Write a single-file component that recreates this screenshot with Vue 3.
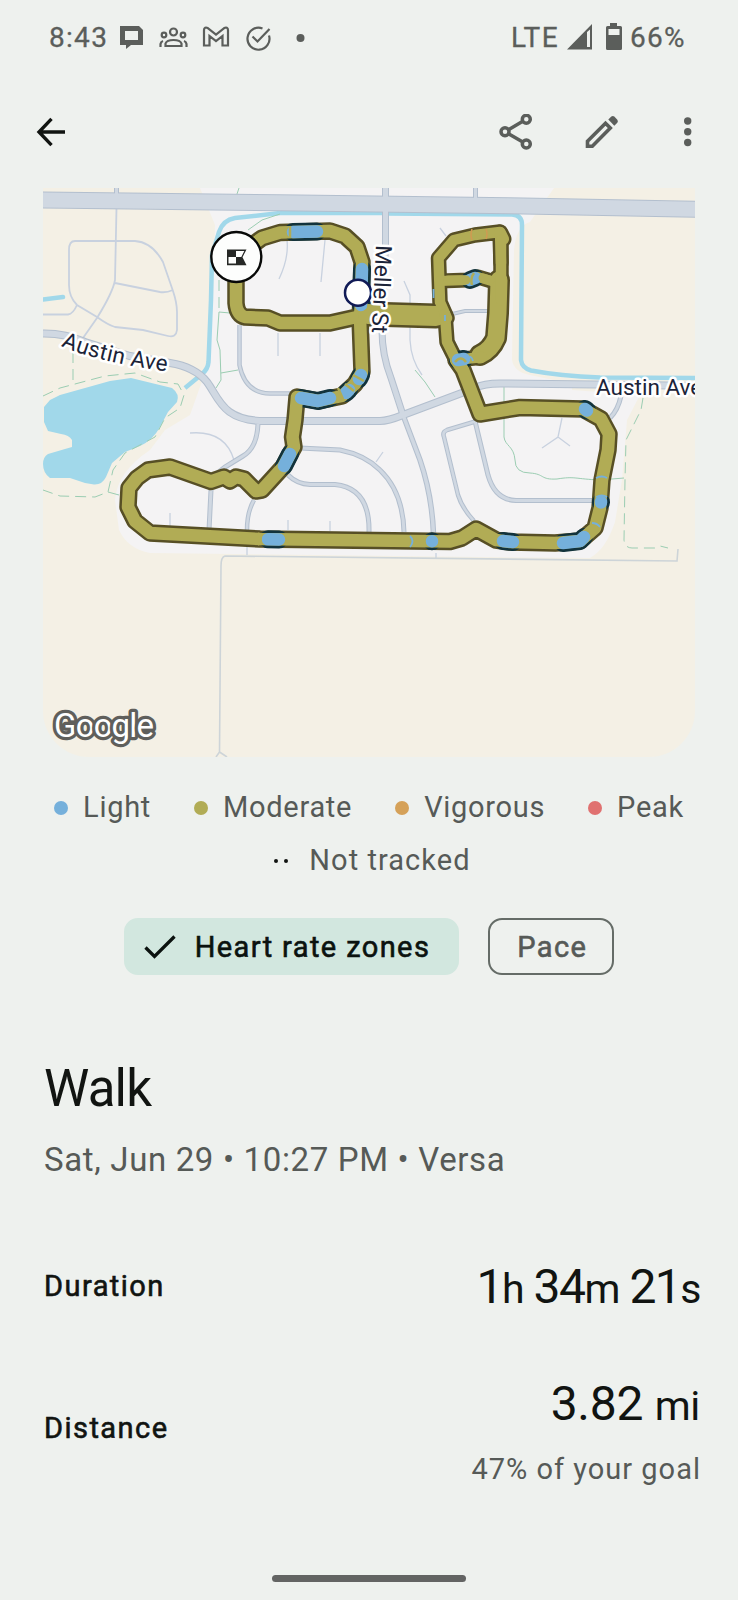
<template>
  <div class="screen">
    <header class="status-bar">
      <span class="time">8:43</span>
      <svg class="st-icons" width="190" height="40" viewBox="115 18 190 40">
        <path class="fill" fill-rule="evenodd" d="M120 26h19l4 4v15h-12l-5 4v-4h-6zM125 31v9h13v-9z" />
        <g class="line" stroke-width="2.2">
          <circle cx="173.500" cy="32" r="3.500" />
          <circle cx="164" cy="35" r="2.300" />
          <circle cx="183" cy="35" r="2.300" />
          <path d="M165.500 46v-2.500c1-3 5-3.500 8-3.500s7 .5 8 3.500V46z" />
          <path d="M160.500 47v-3c.2-1.500 1-2.500 2.500-3M186.500 47v-3c-.2-1.500-1-2.500-2.500-3" />
          <path d="M204 45.500V30c0-2.500 2-3 3.500-2l8.500 6.500 8.500-6.500c1.500-1 3.500-.5 3.500 2v15.500h-5.500v-9.500l-6.500 5-6.500-5v9.500z" />
          <path d="M262.500 28.500a11 11 0 1 0 6.500 7" />
          <path d="M252.500 36.500l5 5 12-12.500" />
        </g>
        <circle class="fill" cx="300.500" cy="38" r="4" />
      </svg>
      <span class="network">LTE</span>
      <svg class="signal" width="60" height="40" viewBox="565 18 60 40">
        <path class="fill" fill-rule="evenodd" d="M567 49.500L592 24v25.500zM587 32v15h3V29.500z" />
        <path class="fill" fill-rule="evenodd" d="M610 23h7v3h3.500q1.500 0 1.500 1.500v21q0 1.500-1.500 1.500h-13q-1.500 0-1.500-1.500v-21q0-1.500 1.500-1.500h2.500zM608.500 29v6h11v-6z" />
      </svg>
      <span class="percent">66%</span>
    </header>

    <nav class="app-bar">
      <button class="icon-btn" aria-label="Back">
        <svg width="30" height="30" viewBox="0 0 30 30">
          <path d="M29 15H4M15.500 1.800L3 15l12.500 13.200" fill="none" stroke="#111411" stroke-width="3.400" />
        </svg>
      </button>
      <div class="actions">
        <button class="icon-btn" aria-label="Share">
          <svg width="34" height="36" viewBox="499 114 34 36">
            <g class="line" stroke-width="3.500">
              <circle cx="505" cy="131.700" r="4" />
              <circle cx="526.300" cy="119.300" r="4" />
              <circle cx="526.300" cy="144" r="4" />
              <path d="M508.500 129.700l14.300-8.400M508.500 133.700l14.300 8.300" />
            </g>
          </svg>
        </button>
        <button class="icon-btn" aria-label="Edit">
          <svg width="34" height="36" viewBox="585 114 34 36">
            <path class="line" stroke-width="3.600" d="M587.500 146.200v-5l18-18 4.800 4.800-18 18.200z" />
            <path class="fill" d="M608.300 119.500l3-3q1.500-1.200 3 0l3 3.200q1.200 1.500 0 3l-3 3z" />
          </svg>
        </button>
        <button class="icon-btn" aria-label="More">
          <svg width="10" height="36" viewBox="683 114 10 36">
            <circle class="fill" cx="687.700" cy="121" r="3.700" />
            <circle class="fill" cx="687.700" cy="131.700" r="3.700" />
            <circle class="fill" cx="687.700" cy="142.500" r="3.700" />
          </svg>
        </button>
      </div>
    </nav>

    <svg class="map" viewBox="43 188 652 569">
      <defs>
        <path id="austin-west" d="M61 346Q100 363 172 372" />
        <path id="meller" d="M376 245L371.500 340" />
      </defs>
      <rect x="43" y="188" width="652" height="569" fill="#f4f0e5" />
      <path fill="#f4f3f4" d="M200 188H554L530 222Q516 226 514 250L512 360Q514 372 530 375L572 384V390L640 395L627 420L622 480L615 522Q606 549 590 558L480 557L150 553Q128 549 119 530L115 500Q117 472 150 450L165 430L190 415L206 370L213 300L215 225Z" />
      <!-- lake and canals -->
      <path fill="#a1d8ea" d="M44 407L50 400L60 395L110 381L131 378L172 388Q180 394 177 402L168 412L160 427Q153 440 140 446L125 452L112 463L106 477Q102 485 94 484.500L85 483L70 478H50Q43 473 43 464Q43 457 48 454L65 449L72 447V440Q69 435 61 434L48 431L44 422Z" />
      <g fill="none" stroke="#a1d8ea" stroke-width="4.500">
        <path d="M43 299.500L63 297" stroke-linecap="round" />
        <path d="M386 213L280 213L235 218Q223 220 219 232L212 255L211 300L208.500 362Q208 369 202 374L185 388" />
        <path d="M386 213.500L512 214.500Q522 215 522 225L521 360Q522 368 531 370.500Q560 376 600 377.500L695 378" />
      </g>
      <!-- trails -->
      <g fill="none" stroke="#9bcdb2" stroke-width="1">
        <path d="M43 396L60 388L105 376L135 373L160 382L178 384L184 395L180 408L165 418L155 437L125 453L113 470L108 492L95 497L60 496L43 490M73 352V386M219 280V312M643 398L641 410L626 440L625 480L624 540Q625 548 632 548H655L660 546L668 548" stroke-dasharray="11 6" />
        <path d="M219 312L217 340L220 350L221 380L216 388M219 312L230 313M221 373L238 370M248 230L262 220L280 214M236 197L239 188M108 492L119 495M415 370L425 382L435 397M504 387V437C505 446 514 446 515 460Q515 473 530 473C545 474 540 480 557 479C575 476 575 479 600 480L624 478" />
      </g>
      <!-- minor lanes -->
      <g fill="none" stroke="#c8d1df" stroke-width="1.800">
        <path d="M116.500 208L115 280Q113 292 97 318L83 338M75 241H135Q152 242 163 262L173 291Q177 303 177 312V330Q176 338 168 336L143 330L115 327Q108 325 97 317L77 305Q69 297 69 285V250Q69 241 75 241M115 283L160 292Q166 293 173 290M43 314.500H68Q73 314 77 305" />
        <path d="M190 433Q225 430 234 460M170 513V527M376 462L383 452M288 520V530M330 521V531M562 418L558 437L542 448M558 437L570 446M287 240Q289 258 279 279M325 240L321 282M278 333V356M320 333V356M404 281L410 295V340Q411 360 422 375M440 228L446 236M436 553V559M247 545V555" stroke-width="1.300" />
        <path d="M678 549L677 561L225 556Q221 557 221 566L219.500 752L216 757M219.500 752L227 757" stroke="#cdd4d8" stroke-width="1.600" />
      </g>
      <!-- streets: casing first, then the surface -->
      <g v-for="layer in layers" :key="layer.color" fill="none" :stroke="layer.color">
        <path v-for="(s, i) in streets" :key="i" :d="s.d" :stroke-width="s.w + layer.grow" />
      </g>
      <!-- recorded route -->
      <g class="route" stroke="#574f25">
        <path v-for="(r, i) in route" :key="i" :d="r.d" :stroke-width="r.w" />
      </g>
      <path class="route" :d="lightZone" stroke="#12333c" stroke-width="18" />
      <g class="route" stroke="#b1ac55">
        <path v-for="(r, i) in route" :key="i" :d="r.d" :stroke-width="r.w - 5" />
      </g>
      <path class="route" :d="lightZone" stroke="#75b0db" stroke-width="12.500" />
      <path class="route" d="M448 280H466M483 278L490 280" stroke="#b1ac55" stroke-width="9" />
      <g fill="none" stroke="#75b0db" stroke-width="1.800">
        <path d="M410 536q5 5 0 11M596 478q6-3 11 0M596 497q6-3 11 0M592 523q5 0 8 4M474 283q1-6 5-9" />
        <path d="M468 359q3-5 5 2M433.500 289v9M445 315v6" />
      </g>
      <path d="M353 375l11 6M345 384l9 7M338 388l5 11M258 533q5 6 0 12M290 226v12M474 273q-4 5-2 12M455 362q6-7 11 0" fill="none" stroke="#b1ac55" stroke-width="2.500" />
      <path d="M472 229q-2 6 0 11M486 229q2 5 0 10" fill="none" stroke="#d09a52" stroke-width="1.500" />
      <circle cx="358" cy="292.700" r="13" fill="#fff" stroke="#101a56" stroke-width="2.500" />
      <circle cx="236.300" cy="257" r="25" fill="#fdfefd" stroke="#080908" stroke-width="2.400" />
      <path fill="#262826" fill-rule="evenodd" d="M227 249.500h19.500l-4 7.700 4 8H227zM236 251v6h-7.500v6.500H236v-6.500h5.300l3-6z" />

      <text class="street"><textPath href="#austin-west" textLength="109">Austin Ave</textPath></text>
      <text class="street"><textPath href="#meller" textLength="88">Meller St</textPath></text>
      <text class="street" x="596" y="394.500">Austin Ave</text>
      <text class="brand" x="54" y="737" textLength="100">Google</text>
    </svg>

    <ul class="legend">
      <li v-for="z in zones" :key="z.name">
        <i class="dot" :class="z.name.toLowerCase()"></i>{{ z.name }}
      </li>
      <li class="no-data"><i class="untracked"></i>Not tracked</li>
    </ul>

    <div class="chips">
      <button class="chip" :class="{ selected: mode === 'zones' }" @click="mode = 'zones'">
        <svg v-if="mode === 'zones'" width="32" height="26" viewBox="0 0 32 26">
          <path d="M1.500 13.500l9 9L30.500 2.500" fill="none" stroke="#0b120f" stroke-width="3.300" />
        </svg>
        <span>Heart rate zones</span>
      </button>
      <button class="chip" :class="{ selected: mode === 'pace' }" @click="mode = 'pace'">
        <span>Pace</span>
      </button>
    </div>

    <main class="summary">
      <h1>Walk</h1>
      <p class="when">Sat, Jun 29 • 10:27 PM • Versa</p>

      <section class="metric duration">
        <h2>Duration</h2>
        <div class="value">1<small>h</small> 34<small>m</small> 21<small>s</small></div>
      </section>

      <section class="metric distance">
        <h2>Distance</h2>
        <div class="column">
          <div class="value">3.82 <small>mi</small></div>
          <p class="goal">47% of your goal</p>
        </div>
      </section>
    </main>

    <div class="home-handle"></div>
  </div>
</template>

<script setup>
import { ref } from 'vue'

const mode = ref('zones')

const zones = [
  { name: 'Light' },
  { name: 'Moderate' },
  { name: 'Vigorous' },
  { name: 'Peak' }
]

const layers = [
  { color: '#b3bfce', grow: 1 },
  { color: '#d0d8e2', grow: -1 }
]

const streets = [
  { w: 4, d: 'M116.500 186V197' },
  { w: 4, d: 'M475.500 186V200' },
  { w: 6, d: 'M385.500 186V245L382 330Q382 355 391 378L403 415' },
  { w: 4.5, d: 'M403 415L420 460Q432 495 433.500 534' },
  { w: 3.5, d: 'M239.500 325V365Q245 393 270 393.500H300' },
  { w: 4, d: 'M258 424Q257 448 243 456L225 467L215 475M211 490L209 530' },
  { w: 3.5, d: 'M254 500Q247 512 247 530' },
  { w: 4, d: 'M300 448L340 450Q365 455 380 470Q403 492 404 532' },
  { w: 4, d: 'M288 475Q297 484 310 484.500H335Q370 488 369 532' },
  { w: 3.5, d: 'M477 421L447 430Q442 432 444 437L458 495Q462 508 474 521' },
  { w: 4, d: 'M475 421L488 475Q495 500 516 500.500H602' },
  { w: 4, d: 'M621 396Q618 410 610 418' },
  { w: 3, d: 'M448 315L465 311H492' },
  { w: 7, d: 'M42 333.500Q65 333 85 342L130 356L170 363Q195 367 207 382C219 398 222 421 265 421H380Q388 421 403 415L475 388Q484 383.500 500 383.500L640 385L696 386' },
  { w: 16, d: 'M41 200L280 202.700L510 205.700L697 209.300' }
]

const route = [
  { w: 17.5, d: 'M236 257L262 238L280 232.500L330 231L345 236L357 247L362 262L361 300L360 318L361 345L362 372L355 384L342 396L318 401L297 397L295 420L292.500 437L294 447L283 467L262 490L256 491L244 479L236 477L230 481L224 477L211 481.500L170 467L148 470L137 478L129 488L128 507L135 521L150 533L260 539L450 541.500L462 538L476 529L496 540L510 542L555 543L580 541L595 528L600 508L602 480L608 450L609 434L601 419L583 409L520 407.500L480 414L463 370L456 360' },
  { w: 17.5, d: 'M236 257V303Q237 315 245 317L268 318L280 323L330 323L357 317' },
  { w: 25, d: 'M368 314L436 316' },
  { w: 15.5, d: 'M447 318L440 302L438.500 258L454 240L475 235L500 232L501 263' },
  { w: 17, d: 'M500 233L503 239' },
  { w: 15, d: 'M440 281L468 280L478 277L498 283' },
  { w: 22, d: 'M499 280L498 313L496 338Q491 350 480 355' },
  { w: 15.5, d: 'M501 240V300M445 314L447 342L456 360L482 357' }
]

// stretches walked in the light heart rate zone
const lightZone =
  'M293 232L317 231.500M362 269L361 305M361 375L359 379M349 390L346 393' +
  'M301 398L318 401L330 398M290 454L284 466M268 539.300L279 539.500' +
  'M432 541.200V541.300M503 541L513 542M563 543L580 541L584 537' +
  'M585 409L587 410.500M601 502V502.500M470 280L475 278M458 360L464 359'
</script>

<style>
body {
  background: #eef1ee;
}
</style>

<style scoped>
.screen {
  display: flex;
  flex-direction: column;
  width: 738px;
  height: 1600px;
  overflow: hidden;
  background: #eef1ee;
  color: #111411;
  font-family: Roboto, "Noto Sans", sans-serif;
}
button {
  display: flex;
  align-items: center;
  padding: 0;
  border: 0;
  background: none;
  font: inherit;
}
svg {
  display: block;
  flex: none;
}
.fill {
  fill: #5b5e5b;
}
.line {
  fill: none;
  stroke: #5b5e5b;
}
.status-bar {
  display: flex;
  align-items: center;
  height: 76px;
  padding-left: 49px;
  color: #5b5e5b;
  font-size: 28px;
  line-height: 40px;
  letter-spacing: 1.3px;
  -webkit-text-stroke: 0.3px;
}
.time {
  width: 66px;
}
.network {
  width: 54px;
  margin-left: 206px;
}
.percent {
  margin-left: 5px;
}
.app-bar {
  display: flex;
  align-items: center;
  justify-content: space-between;
  height: 112px;
  padding: 0 45px 0 36px;
  box-sizing: border-box;
}
.actions {
  display: flex;
}
.actions .icon-btn {
  margin-left: 52px;
}
.actions .icon-btn:last-child {
  margin-left: 64px;
}
.map {
  width: 652px;
  height: 569px;
  margin-left: 43px;
  border-radius: 0 0 46px 46px;
}
.route {
  fill: none;
  stroke-linejoin: round;
  stroke-linecap: round;
}
.street {
  fill: #1b2338;
  stroke: #fff;
  stroke-width: 5px;
  stroke-linejoin: round;
  paint-order: stroke;
  font-size: 22.500px;
}
.brand {
  fill: #fff;
  stroke: #5f5f5c;
  stroke-width: 6.500px;
  stroke-linejoin: round;
  paint-order: stroke;
  font-size: 33px;
}
.legend {
  display: flex;
  flex-wrap: wrap;
  justify-content: center;
  column-gap: 43px;
  margin: 24px 0 0;
  padding: 0 40px;
  list-style: none;
  color: #565a57;
  font-size: 29px;
  line-height: 53px;
  letter-spacing: 0.7px;
}
.legend li {
  display: flex;
  align-items: center;
}
.legend .no-data {
  padding-left: 7px;
  letter-spacing: 1.05px;
}
.dot {
  width: 14px;
  height: 14px;
  margin-right: 15px;
  border-radius: 50%;
}
.light {
  background: #75b0db;
}
.moderate {
  background: #b1ac55;
}
.vigorous {
  background: #d5a158;
}
.peak {
  background: #e07170;
}
.untracked {
  width: 4px;
  height: 4px;
  margin-right: 31px;
  border-radius: 50%;
  background: #111411;
  box-shadow: 10px 0 #111411;
}
.chips {
  display: flex;
  justify-content: center;
  gap: 29px;
  margin-top: 31px;
}
.chip {
  height: 57px;
  padding: 0 25px 0 27px;
  border: 2px solid #656c67;
  border-radius: 14px;
  color: #565a57;
  font-size: 29px;
  letter-spacing: 1.4px;
  -webkit-text-stroke: 0.6px;
}
.chip.selected {
  padding: 0 27px 0 18px;
  border-color: #d2e7df;
  background: #d2e7df;
  color: #0b120f;
}
.chip svg {
  margin-right: 19px;
}
.summary {
  padding: 0 38px 0 44px;
}
h1 {
  margin: 84px 0 0;
  font-size: 51px;
  font-weight: 400;
  line-height: 60px;
  letter-spacing: -0.8px;
}
.when {
  margin: 21px 0 0;
  color: #565a57;
  font-size: 33px;
  line-height: 40px;
  letter-spacing: 0.65px;
}
.metric {
  display: flex;
  align-items: center;
  justify-content: space-between;
}
.duration {
  height: 100px;
  margin-top: 56px;
}
.duration .value {
  padding-top: 4px;
  letter-spacing: -1.5px;
}
.distance {
  height: 130px;
  margin-top: 27px;
}
h2 {
  margin: 0;
  font-size: 29px;
  font-weight: 400;
  letter-spacing: 1.45px;
  -webkit-text-stroke: 0.6px;
}
.column {
  padding-top: 8px;
  text-align: right;
}
.value {
  font-size: 48px;
  line-height: 56px;
  letter-spacing: -0.3px;
}
.value small {
  font-size: 41px;
}
.goal {
  margin: 15px -1px 0 0;
  color: #565a57;
  font-size: 29px;
  line-height: 40px;
  letter-spacing: 1px;
}
.home-handle {
  width: 194px;
  height: 7px;
  margin: auto auto 18px;
  border-radius: 4px;
  background: #636463;
}
</style>
